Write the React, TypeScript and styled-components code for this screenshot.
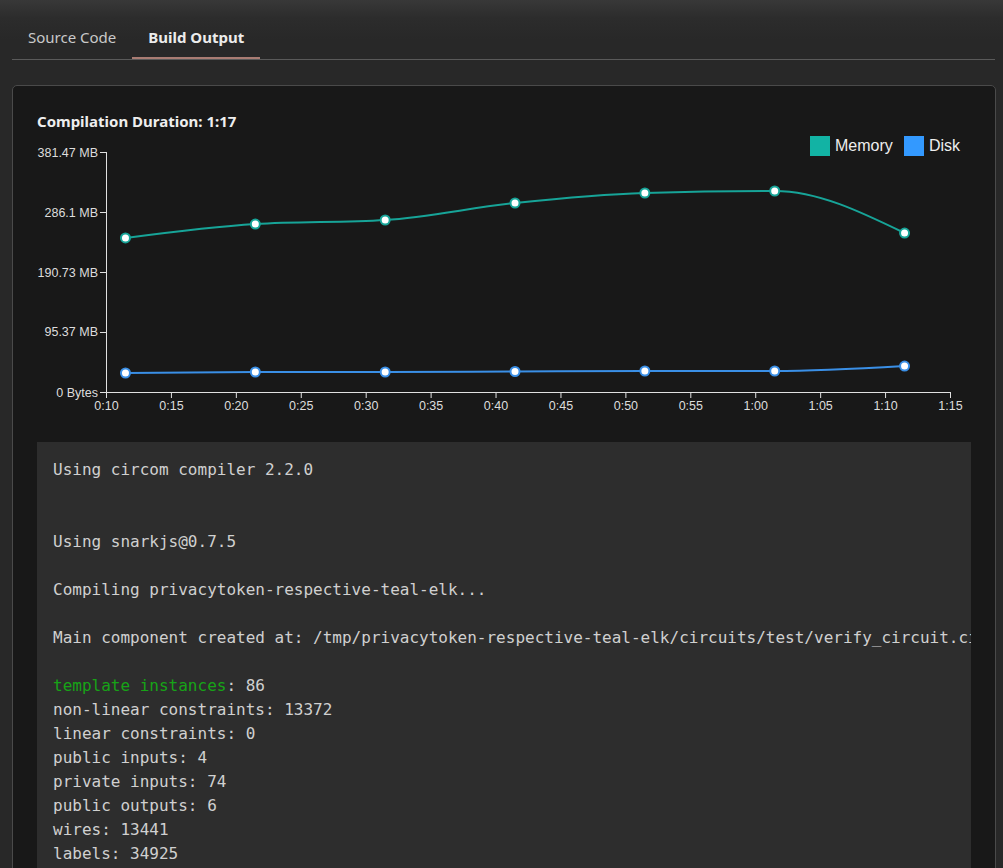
import React from "react";
import styled, { createGlobalStyle } from "styled-components";

const GlobalStyle = createGlobalStyle`
  html, body {
    margin: 0;
    padding: 0;
    overflow: hidden;
    background: #282828;
  }
  body {
    font-family: "Noto Sans", "Open Sans", sans-serif;
  }
`;

const Page = styled.div`
  min-height: 868px;
  padding: 16px 7px 0 12px;
  background: linear-gradient(180deg, #383838 0px, #2c2c2c 18px, #282828 40px, #282828 100%);
`;

const TabBar = styled.div`
  display: flex;
  border-bottom: 1px solid #5a5a5a;
  margin-right: 1px;
`;

const Tab = styled.button<{ $active?: boolean }>`
  background: none;
  border: none;
  padding: 10px 16px 9px;
  font-family: "Noto Sans", sans-serif;
  font-size: 15px;
  line-height: 22px;
  font-weight: ${(p) => (p.$active ? 700 : 400)};
  color: ${(p) => (p.$active ? "#ececec" : "#c9c9c9")};
  border-bottom: 2px solid ${(p) => (p.$active ? "#a97c73" : "transparent")};
  cursor: pointer;
`;

const Card = styled.div`
  margin-top: 25px;
  background: #181818;
  border: 1px solid #4a4a4a;
  border-radius: 5px;
  padding: 24px 24px 0;
`;

const Title = styled.div`
  font-family: "Noto Sans", sans-serif;
  font-weight: 700;
  font-size: 15px;
  line-height: 22px;
  color: #eeeeee;
`;

const ChartSvg = styled.svg`
  display: block;
  width: 100%;
  height: 292px;
  margin-top: 1px;
  font-family: "Liberation Sans", Arial, sans-serif;
`;

const Console = styled.pre`
  margin: 17px 0 0;
  background: #2d2d2d;
  padding: 16px 0 60px 16px;
  font-family: "DejaVu Sans Mono", "Liberation Mono", monospace;
  font-size: 16px;
  line-height: 24px;
  color: #d0d0d0;
  white-space: pre;
  overflow: hidden;
`;

const Green = styled.span`
  color: #17a317;
`;

// chart geometry in svg coordinates
const W = 934;
const X0 = 69;
const X1 = 913;
const Y0 = 259;
const Y1 = 19;
const T_MIN = 10;
const T_MAX = 75;
const V_MAX = 381.47;

const sx = (t: number) => X0 + ((t - T_MIN) / (T_MAX - T_MIN)) * (X1 - X0);
const sy = (v: number) => Y0 - (v / V_MAX) * (Y0 - Y1);

const times = [11.5, 21.5, 31.5, 41.5, 51.5, 61.5, 71.5];
const memory = [244.8, 267.0, 273.4, 300.4, 316.3, 319.5, 252.7];
const disk = [30.2, 31.8, 31.8, 32.6, 33.4, 33.4, 41.3];

const sign = (n: number) => (n < 0 ? -1 : 1);

// same shape as d3 curveMonotoneX
function monotonePath(pts: [number, number][]) {
  const n = pts.length;
  const m: number[] = new Array(n).fill(0);
  for (let i = 1; i < n - 1; i++) {
    const [x0, y0] = pts[i - 1];
    const [x1, y1] = pts[i];
    const [x2, y2] = pts[i + 1];
    const h0 = x1 - x0;
    const h1 = x2 - x1;
    const s0 = (y1 - y0) / h0;
    const s1 = (y2 - y1) / h1;
    const p = (s0 * h1 + s1 * h0) / (h0 + h1);
    m[i] = (sign(s0) + sign(s1)) * Math.min(Math.abs(s0), Math.abs(s1), 0.5 * Math.abs(p)) || 0;
  }
  const slope2 = (a: [number, number], b: [number, number], t: number) => {
    const h = b[0] - a[0];
    return h ? (3 * (b[1] - a[1]) / h - t) / 2 : t;
  };
  m[0] = slope2(pts[0], pts[1], m[1]);
  m[n - 1] = slope2(pts[n - 2], pts[n - 1], m[n - 2]);
  let d = `M${pts[0][0]},${pts[0][1]}`;
  for (let i = 0; i < n - 1; i++) {
    const [x0, y0] = pts[i];
    const [x1, y1] = pts[i + 1];
    const dx = (x1 - x0) / 3;
    d += `C${x0 + dx},${y0 + dx * m[i]},${x1 - dx},${y1 - dx * m[i + 1]},${x1},${y1}`;
  }
  return d;
}

const yTicks = [
  { v: 0, label: "0 Bytes" },
  { v: 95.37, label: "95.37 MB" },
  { v: 190.73, label: "190.73 MB" },
  { v: 286.1, label: "286.1 MB" },
  { v: 381.47, label: "381.47 MB" },
];

const xTicks = Array.from({ length: 14 }, (_, i) => {
  const t = 10 + i * 5;
  const label = `${Math.floor(t / 60)}:${String(t % 60).padStart(2, "0")}`;
  return { t, label };
});

const series = [
  { name: "Memory", values: memory, line: "#17a498", swatch: "#12b3a4" },
  { name: "Disk", values: disk, line: "#3a8fe6", swatch: "#3399ff" },
];

function UsageChart() {
  return (
    <ChartSvg viewBox={`0 0 ${W} 292`}>
      {/* y axis */}
      <line x1={X0 + 0.5} y1={Y1} x2={X0 + 0.5} y2={Y0} stroke="#e0e0e0" />
      {yTicks.map((tk) => (
        <g key={tk.label} transform={`translate(0, ${sy(tk.v) + 0.5})`}>
          <line x1={X0 - 6} x2={X0} stroke="#e0e0e0" />
          <text x={X0 - 8} dy="0.32em" textAnchor="end" fontSize="12.5" fill="#dddddd">
            {tk.label}
          </text>
        </g>
      ))}
      {/* x axis */}
      <line x1={X0} y1={Y0 + 0.5} x2={X1} y2={Y0 + 0.5} stroke="#e0e0e0" />
      {xTicks.map((tk) => (
        <g key={tk.label} transform={`translate(${sx(tk.t) + 0.5}, ${Y0})`}>
          <line y1={0} y2={6} stroke="#e0e0e0" />
          <text y={9} dy="0.71em" textAnchor="middle" fontSize="12.5" fill="#dddddd">
            {tk.label}
          </text>
        </g>
      ))}
      {series.map((s) => {
        const pts = times.map((t, i) => [sx(t), sy(s.values[i])] as [number, number]);
        return (
          <g key={s.name}>
            <path d={monotonePath(pts)} fill="none" stroke={s.line} strokeWidth={2} />
            {pts.map(([x, y], i) => (
              <circle key={i} cx={x} cy={y} r={4.5} fill="#ffffff" stroke={s.line} strokeWidth={2} />
            ))}
          </g>
        );
      })}
      {/* legend */}
      <g transform="translate(773, 3)">
        <rect x={0} y={0} width={20} height={20} fill={series[0].swatch} />
        <text x={25} y={10} dy="0.32em" fontSize="16" fill="#eeeeee">Memory</text>
        <rect x={94} y={0} width={20} height={20} fill={series[1].swatch} />
        <text x={119} y={10} dy="0.32em" fontSize="16" fill="#eeeeee">Disk</text>
      </g>
    </ChartSvg>
  );
}

export default function App() {
  return (
    <>
      <GlobalStyle />
      <Page>
        <TabBar>
          <Tab>Source Code</Tab>
          <Tab $active>Build Output</Tab>
        </TabBar>
        <Card>
          <Title>Compilation Duration: 1:17</Title>
          <UsageChart />
          <Console>
            {"Using circom compiler 2.2.0\n\n\nUsing snarkjs@0.7.5\n\nCompiling privacytoken-respective-teal-elk...\n\nMain component created at: /tmp/privacytoken-respective-teal-elk/circuits/test/verify_circuit.circom\n\n"}
            <Green>template instances</Green>
            {": 86\nnon-linear constraints: 13372\nlinear constraints: 0\npublic inputs: 4\nprivate inputs: 74\npublic outputs: 6\nwires: 13441\nlabels: 34925"}
          </Console>
        </Card>
      </Page>
    </>
  );
}
